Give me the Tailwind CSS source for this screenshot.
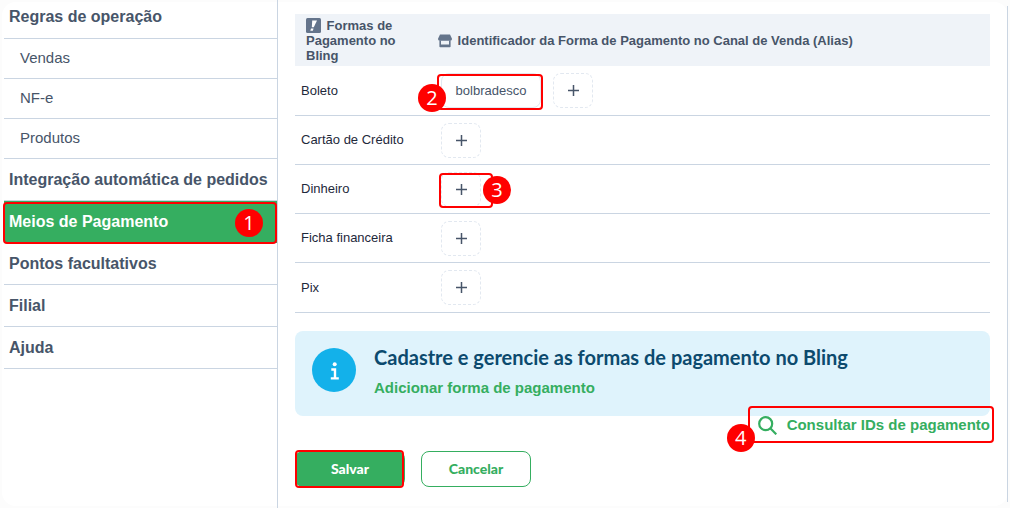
<!DOCTYPE html>
<html lang="pt-BR">
  <head>
    <meta charset="UTF-8" />
    <meta name="viewport" content="width=device-width, initial-scale=1.0" />
    <title>Meios de Pagamento</title>
    <script src="https://cdn.jsdelivr.net/npm/@tailwindcss/browser@4"></script>
  </head>

  <body class="bg-[#fcfcfc] font-['Liberation_Sans',Arial,sans-serif] text-[#475569]">
    <div class="relative isolate flex min-h-screen">
      <!-- Card behind the two columns -->
      <div class="absolute inset-0.5 -z-10 rounded-[14px] bg-white"></div>
      <div class="absolute inset-y-1.5 right-0.5 -z-10 w-px bg-slate-300"></div>

      <!-- Sidebar -->
      <aside class="w-[278px] shrink-0 border-r border-slate-300 pl-1">
        <nav class="flex flex-col text-base font-bold">
          <a href="#" class="flex h-[39px] items-center border-b border-slate-300 pb-1 pl-[5px]">Regras de operação</a>
          <a href="#" class="flex h-10 items-center border-b border-slate-300 pl-4 text-[15px] font-normal">Vendas</a>
          <a href="#" class="flex h-10 items-center border-b border-slate-300 pl-4 text-[15px] font-normal">NF-e</a>
          <a href="#" class="flex h-10 items-center border-b border-slate-300 pl-4 text-[15px] font-normal">Produtos</a>
          <a href="#" class="flex h-[42px] items-center border-b border-slate-300 pl-[5px] whitespace-nowrap">Integração automática de pedidos</a>
          <a href="#" class="relative flex h-[42px] items-center border-b border-[#35ae60] bg-[#35ae60] pl-[5px] text-white" aria-current="page">
            Meios de Pagamento
            <span class="absolute -left-px right-0 top-px h-[42px] rounded-[4px] border-2 border-[#ff0000]"></span>
            <span class="absolute right-[14px] top-2 flex size-7 items-center justify-center rounded-full bg-[#ff0000] font-['Open_Sans',sans-serif] text-xl font-normal text-white">1</span>
          </a>
          <a href="#" class="flex h-[42px] items-center border-b border-slate-300 pl-[5px]">Pontos facultativos</a>
          <a href="#" class="flex h-[42px] items-center border-b border-slate-300 pl-[5px]">Filial</a>
          <a href="#" class="flex h-[42px] items-center border-b border-slate-300 pl-[5px]">Ajuda</a>
        </nav>
      </aside>

      <!-- Content -->
      <main class="min-w-0 flex-1 pt-[14px] pr-5 pl-[17px]">
        <table class="w-full table-fixed border-separate border-spacing-0 text-[13px]">
          <thead>
            <tr class="h-[52px] bg-[#eff3f8] text-left leading-[15px]">
              <th class="w-[132px] px-[11px]">
                <svg class="mr-0.5 inline size-[15px] align-[-3px]" viewBox="0 0 15 15" aria-hidden="true">
                  <rect width="15" height="15" rx="1.500" fill="#64748b" />
                  <path d="M6.200 2.500h4.800L7.800 9.300H5.800z" fill="#fff" />
                  <path d="M5 10.500h2.500l-.7 2.200H4.300z" fill="#fff" />
                </svg>
                Formas de Pagamento no Bling
              </th>
              <th class="px-[11px]">
                <svg class="mr-0.5 inline size-[14px] align-[-3px]" viewBox="0 0 14 14" aria-hidden="true">
                  <path d="M2 .5h10l2 4.200c0 1.300-.7 2-1.800 2H1.800C.7 6.700 0 6 0 4.700z" fill="#64748b" />
                  <path d="M2.200 6.500v6h9.600v-6" fill="none" stroke="#64748b" stroke-width="1.600" stroke-linejoin="round" />
                  <path d="M2 10.500h10V13H2z" fill="#64748b" />
                </svg>
                Identificador da Forma de Pagamento no Canal de Venda (Alias)
              </th>
            </tr>
          </thead>
          <tbody class="text-[#1e293b]">
            <tr class="h-[50px]">
              <td class="border-b border-slate-300 pl-[6px]">Boleto</td>
              <td class="border-b border-slate-300 pl-[14px]">
                <div class="relative flex gap-3">
                  <button class="h-[35px] w-[100px] rounded-lg border border-slate-200 text-[13px] text-[#475569]">bolbradesco</button>
                  <button class="flex h-[35px] w-10 items-center justify-center rounded-lg border border-dashed border-slate-200" aria-label="Adicionar">
                    <svg class="size-[11px]" viewBox="0 0 11 11" aria-hidden="true"><path d="M5.500 0v11M0 5.500h11" stroke="#475569" stroke-width="1.500" /></svg>
                  </button>
                  <span class="absolute -left-1 top-px h-9 w-[106px] rounded-[4px] border-2 border-[#ff0000]"></span>
                  <span class="absolute -left-[23px] top-[11px] flex size-7 items-center justify-center rounded-full bg-[#ff0000] font-['Open_Sans',sans-serif] text-xl text-white">2</span>
                </div>
              </td>
            </tr>
            <tr class="h-[49px]">
              <td class="border-b border-slate-300 pl-[6px]">Cartão de Crédito</td>
              <td class="border-b border-slate-300 pl-[14px]">
                <button class="flex h-[35px] w-10 items-center justify-center rounded-lg border border-dashed border-slate-200" aria-label="Adicionar">
                  <svg class="size-[11px]" viewBox="0 0 11 11" aria-hidden="true"><path d="M5.500 0v11M0 5.500h11" stroke="#475569" stroke-width="1.500" /></svg>
                </button>
              </td>
            </tr>
            <tr class="h-[49px]">
              <td class="border-b border-slate-300 pl-[6px]">Dinheiro</td>
              <td class="border-b border-slate-300 pl-[14px]">
                <div class="relative">
                  <button class="flex h-[35px] w-10 items-center justify-center rounded-lg border border-dashed border-slate-200" aria-label="Adicionar">
                    <svg class="size-[11px]" viewBox="0 0 11 11" aria-hidden="true"><path d="M5.500 0v11M0 5.500h11" stroke="#475569" stroke-width="1.500" /></svg>
                  </button>
                  <span class="absolute -left-0.5 top-px h-[35px] w-[54px] rounded-[4px] border-2 border-[#ff0000]"></span>
                  <span class="absolute left-[42px] top-1 flex size-7 items-center justify-center rounded-full bg-[#ff0000] font-['Open_Sans',sans-serif] text-xl text-white">3</span>
                </div>
              </td>
            </tr>
            <tr class="h-[49px]">
              <td class="border-b border-slate-300 pl-[6px]">Ficha financeira</td>
              <td class="border-b border-slate-300 pl-[14px]">
                <button class="flex h-[35px] w-10 items-center justify-center rounded-lg border border-dashed border-slate-200" aria-label="Adicionar">
                  <svg class="size-[11px]" viewBox="0 0 11 11" aria-hidden="true"><path d="M5.500 0v11M0 5.500h11" stroke="#475569" stroke-width="1.500" /></svg>
                </button>
              </td>
            </tr>
            <tr class="h-[50px]">
              <td class="border-b border-slate-300 pl-[6px]">Pix</td>
              <td class="border-b border-slate-300 pl-[14px]">
                <button class="flex h-[35px] w-10 items-center justify-center rounded-lg border border-dashed border-slate-200" aria-label="Adicionar">
                  <svg class="size-[11px]" viewBox="0 0 11 11" aria-hidden="true"><path d="M5.500 0v11M0 5.500h11" stroke="#475569" stroke-width="1.500" /></svg>
                </button>
              </td>
            </tr>
          </tbody>
        </table>

        <section class="mt-[18px] flex gap-[18px] rounded-lg bg-[#dff3fc] px-[17px] pt-[14px] pb-[17px]">
          <svg class="mt-[3px] size-11 shrink-0" viewBox="0 0 44 44" aria-hidden="true">
            <circle cx="22" cy="22" r="22" fill="#13b1ea" />
            <circle cx="22.700" cy="16.300" r="2" fill="#fff" />
            <path d="M19.300 21.500h3.700v8.500M18.800 30.400h8" fill="none" stroke="#fff" stroke-width="2.400" />
          </svg>
          <div>
            <h2 class="font-['Lato',sans-serif] text-xl leading-6 font-bold text-[#0c4a6e]">Cadastre e gerencie as formas de pagamento no Bling</h2>
            <a href="#" class="mt-2 block text-[15px] leading-[22px] font-bold text-[#35ae60]">Adicionar forma de pagamento</a>
          </div>
        </section>

        <div class="flex justify-end">
          <a href="#" class="relative flex h-[18px] items-center gap-2.5 text-[15px] font-bold text-[#35ae60]">
            <svg class="size-[19px]" viewBox="0 0 19 19" fill="none" stroke="#35ae60" stroke-width="2.200" aria-hidden="true">
              <circle cx="7.700" cy="7.700" r="6.500" />
              <path d="M12.300 12.300l6 6" />
            </svg>
            Consultar IDs de pagamento
            <span class="absolute -left-[10px] -right-1 -top-[10px] h-[37px] rounded-[4px] border-2 border-[#ff0000]"></span>
            <span class="absolute -left-[31px] top-2 flex size-7 items-center justify-center rounded-full bg-[#ff0000] font-['Open_Sans',sans-serif] text-xl font-normal text-white">4</span>
          </a>
        </div>

        <div class="mt-[17px] flex gap-4 font-['Lato',sans-serif] text-sm font-black">
          <button class="relative h-9 w-[110px] rounded-lg bg-[#35ae60] text-white">
            Salvar
            <span class="absolute -top-px right-px -bottom-px left-0 rounded-[4px] border-2 border-[#ff0000]"></span>
          </button>
          <button class="h-9 w-[110px] rounded-lg border border-[#35ae60] text-[#35ae60]">Cancelar</button>
        </div>
      </main>
    </div>
  </body>
</html>
